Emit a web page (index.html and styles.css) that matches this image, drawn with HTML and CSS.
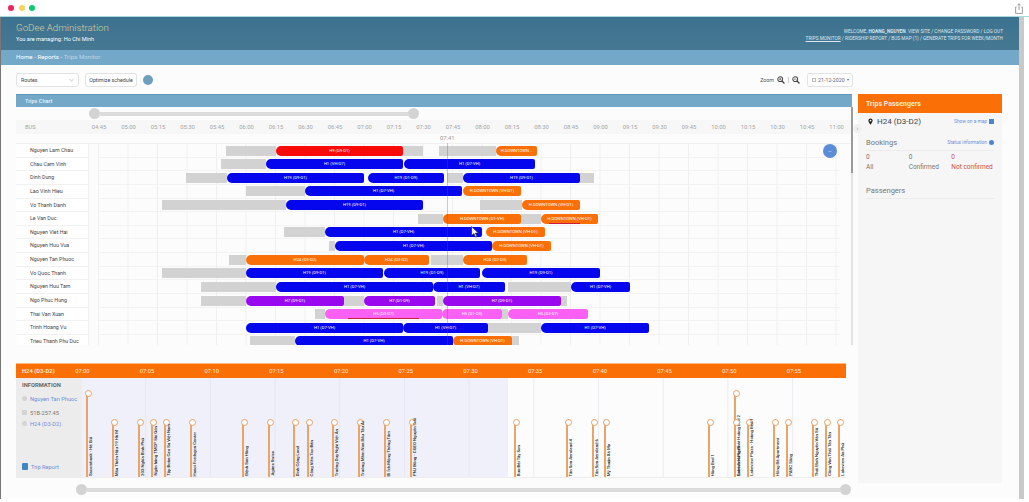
FILE: index.html
```html
<!DOCTYPE html>
<html lang="en">
<head>
    <meta charset="UTF-8">
    <title>Trips Monitor | GoDee Administration</title>
    <link rel="stylesheet" href="styles.css">
</head>
<body>
    <div class="window-bar">
        <div class="dots"><i class="dot red"></i><i class="dot yellow"></i><i class="dot green"></i></div>
        <svg class="share" viewBox="0 0 8 11" width="8" height="11"><path d="M1.500 4H.6v6.400h6.800V4h-.9M4 7V.8M2.400 2.300 4 .7l1.600 1.600" fill="none" stroke="#888" stroke-width=".8"/></svg>
    </div>

    <div class="page">
        <header class="site-header">
            <div>
                <div class="brand">GoDee Administration</div>
                <div class="managing">You are managing: Ho Chi Minh</div>
            </div>
            <div class="user-links">
                <div>WELCOME, <b>HOANG_NGUYEN</b>. VIEW SITE / CHANGE PASSWORD / LOG OUT</div>
                <div><u>TRIPS MONITOR</u> / RIDERSHIP REPORT / BUS MAP (1) / GENERATE TRIPS FOR WEEK/MONTH</div>
            </div>
        </header>
        <nav class="crumbs">Home - Reports - <span>Trips Monitor</span></nav>

        <div class="toolbar">
            <div class="box routes">Routes
                <svg viewBox="0 0 6 4" width="5" height="4"><path d="M.5.8 3 3.200 5.500.8" fill="none" stroke="#999" stroke-width=".7"/></svg>
            </div>
            <div class="box optimize">Optimize schedule</div>
            <i class="status-dot"></i>
            <div class="zoom">
                Zoom
                <svg viewBox="0 0 10 10" width="8" height="8"><circle cx="4" cy="4" r="3" fill="none" stroke="#444" stroke-width="1.300"/><path d="M6.300 6.300 9.300 9.300" stroke="#444" stroke-width="1.600"/><path d="M2.500 4h3M4 2.500v3" stroke="#444" stroke-width=".8"/></svg>
                <i class="zoom-sep"></i>
                <svg viewBox="0 0 10 10" width="8" height="8"><circle cx="4" cy="4" r="3" fill="none" stroke="#444" stroke-width="1.300"/><path d="M6.300 6.300 9.300 9.300" stroke="#444" stroke-width="1.600"/><path d="M2.500 4h3" stroke="#444" stroke-width=".8"/></svg>
            </div>
            <div class="box date"><i class="cal"></i>21-12-2020 <small>▾</small></div>
        </div>

        <div class="content">
            <main class="left">
                <section class="chart">
                    <h2 class="chart-title">Trips Chart</h2>
                    <div class="range top-range"><i class="knob"></i><i class="track"></i><i class="knob"></i></div>
                    <div class="hours" id="hours"><span class="hours-bus">BUS</span></div>
                    <div class="chart-body">
                        <div class="now-label">07:41</div>
                        <div class="rows" id="rows"></div>
                        <i class="now-line"></i>
                        <i class="fab">–</i>
                        <svg class="cursor" viewBox="0 0 8 12" width="8" height="12"><path d="M.6.6v9l2.300-2 1.600 3.500 1.400-.6-1.500-3.400h3z" fill="#fff" stroke="#222" stroke-width=".7"/></svg>
                    </div>
                    <div class="chart-scroll"><i></i></div>
                </section>

                <section class="trip">
                    <div class="trip-head" id="tripHead"><b>H24 (D3-D2)</b></div>
                    <div class="trip-body">
                        <aside class="info">
                            <h3>INFORMATION</h3>
                            <p class="info-line name"><i class="bullet round"></i><a>Nguyen Tan Phuoc</a></p>
                            <p class="info-line plate"><i class="bullet"></i>51B-257.45</p>
                            <p class="info-line route"><i class="bullet round"></i><a>H24 (D3-D2)</a></p>
                            <p class="report"><i class="report-icon"></i><a>Trip Report</a></p>
                        </aside>
                        <div class="stops" id="stops"><i class="done"></i></div>
                    </div>
                    <div class="range bottom-range"><i class="knob"></i><i class="track"></i><i class="knob"></i></div>
                </section>
            </main>

            <i class="collapse">›</i>

            <aside class="side">
                <h2 class="side-title">Trips Passengers</h2>
                <div class="side-body">
                    <div class="side-route">
                        <svg viewBox="0 0 8 10" width="5" height="7"><path d="M4 0a3.400 3.400 0 0 0-3.400 3.400C.6 6 4 10 4 10s3.400-4 3.400-6.600A3.400 3.400 0 0 0 4 0zm0 4.800a1.400 1.400 0 1 1 0-2.800 1.400 1.400 0 0 1 0 2.800z" fill="#222"/></svg>
                        <span>H24 (D3-D2)</span>
                        <a class="side-link">Show on a map <i class="map-icon"></i></a>
                    </div>
                    <div class="side-section">
                        <span>Bookings</span>
                        <a class="side-link">Status information <i class="info-icon"></i></a>
                    </div>
                    <div class="counts">
                        <div><b>0</b>All</div>
                        <div><b>0</b>Confirmed</div>
                        <div class="bad"><b>0</b>Not confirmed</div>
                    </div>
                    <div class="side-section passengers"><span>Passengers</span></div>
                </div>
            </aside>
        </div>
    </div>
    <script src="script.js"></script>
</body>
</html>
```

FILE: styles.css
```css
* {
    box-sizing: border-box;
}

html, body {
    height: 502px;
    margin: 0;
    overflow: hidden;
    background: #fff;
}

body {
    font-family: Roboto, "Liberation Sans", sans-serif;
    color: #555;
    font-size: 6px;
}

i {
    display: block;
    font-style: normal;
}

/* window chrome */
.window-bar {
    height: 17px;
    display: flex;
    align-items: center;
    justify-content: space-between;
    padding: 0 6px 0 8px;
    border-bottom: 1px solid #a8dcdc;
}

.dots {
    display: flex;
    gap: 4.500px;
}

.dot {
    width: 6px;
    height: 6px;
    border-radius: 50%;
}

.red { background: #f0245c; }
.yellow { background: #fbd35c; }
.green { background: #10c878; }

.page {
    height: 482px;
    margin-right: 5px;
    border-left: 1px solid #777;
    border-right: 5px solid #c9c9c9;
    background: #fcfcfc;
    width: 1024px;
}

.site-header {
    height: 33px;
    padding: 3px 16px 0 15px;
    display: flex;
    justify-content: space-between;
    background: linear-gradient(#3c728f, #467893);
    color: #fff;
}

.brand {
    font-size: 9.700px;
    font-weight: 300;
    color: #d9cd9c;
    line-height: 15px;
}

.managing {
    font-size: 5.600px;
    line-height: 9px;
}

.user-links {
    padding-top: 8px;
    text-align: right;
    font-size: 4.750px;
    line-height: 7px;
    color: #dbe8ef;
}

.crumbs {
    height: 15px;
    padding-left: 15px;
    line-height: 15px;
    font-size: 6.200px;
    color: #fff;
    background: #74a8c8;
}

.crumbs span {
    color: #b9d6e6;
}

/* toolbar */
.toolbar {
    height: 29px;
    padding: 8px 0 0 15px;
    width: 852px;
    display: flex;
    align-items: flex-start;
}

.box {
    height: 14px;
    background: #fff;
    border: 1px solid #e2e2e2;
    border-radius: 3px;
    font-size: 5.300px;
    line-height: 12px;
    color: #444;
}

.routes {
    width: 63px;
    padding: 0 4px;
    display: flex;
    align-items: center;
    justify-content: space-between;
}

.optimize {
    width: 52px;
    margin-left: 6px;
    text-align: center;
}

.status-dot {
    width: 10px;
    height: 10px;
    margin: 2px 0 0 6px;
    border-radius: 50%;
    background: #6f9fbd;
}

.zoom {
    margin-left: auto;
    display: flex;
    align-items: center;
    gap: 3px;
    height: 14px;
    font-size: 5.300px;
    color: #555;
}

.zoom-sep {
    width: 1px;
    height: 6px;
    background: #ccc;
}

.date {
    width: 46px;
    margin-left: 7px;
    display: flex;
    align-items: center;
    gap: 2px;
    padding-left: 4px;
    color: #666;
}

.date small {
    font-size: 4px;
}

.cal {
    width: 4px;
    height: 4px;
    border: 1px solid #bbb;
}

.content {
    display: flex;
    align-items: flex-start;
    position: relative;
}

.left {
    width: 836px;
    margin-left: 15px;
}

/* chart */
.chart {
    position: relative;
}

.chart-title {
    margin: 0;
    height: 13px;
    padding-left: 9px;
    font-size: 5.500px;
    font-weight: 500;
    line-height: 13px;
    color: #e8f1f6;
    background: #74a8c8;
    border-top: 1px solid #5f97ba;
}

.range {
    display: flex;
    align-items: center;
}

.knob {
    width: 11px;
    height: 11px;
    flex: none;
    border-radius: 50%;
    background: #d3d3d3;
}

.track {
    height: 4px;
    flex: none;
    background: #dcdcdc;
}

.top-range {
    height: 13px;
    padding-left: 73px;
}

.top-range .track {
    width: 308px;
}

.hours {
    height: 14px;
    display: flex;
    align-items: center;
    background: #f7f7f7;
    padding-left: 68.250px;
    position: relative;
    font-size: 5.800px;
    color: #a5a5a5;
}

.hours span {
    flex: none;
    width: 29.500px;
    text-align: center;
}

.hours .hours-bus {
    position: absolute;
    left: 9px;
    width: auto;
}

.chart-body {
    position: relative;
    height: 211px;
    padding-top: 9px;
    overflow: hidden;
}

.rows {
    height: 202px;
    overflow: hidden;
    border-top: 1px solid #f0f0f0;
}

.row {
    height: 13.650px;
    display: flex;
}

.row-name {
    width: 73px;
    flex: none;
    padding-left: 14px;
    font-size: 5.300px;
    line-height: 12.600px;
    color: #444;
    background: #fff;
    border-bottom: 1px solid #f1f1f1;
    border-right: 1px solid #f1f1f1;
}

.row-track {
    position: relative;
    width: 742px;
    margin-left: 9px;
    border-bottom: 1px solid #f3f3f3;
    background-image: linear-gradient(90deg, #f0f0f0 1px, transparent 1px);
    background-size: 29.500px 100%;
}

.bar {
    position: absolute;
    top: 1.500px;
    height: 10px;
    font-size: 4.200px;
    line-height: 10px;
    text-align: center;
    color: #fff;
    white-space: nowrap;
    overflow: hidden;
    border-radius: 5px 2px 2px 5px;
}

.idle {
    background: #d2d2d2;
    border-radius: 0;
}

.blue { background: #0505ee; }
.hot { background: #fb0a0a; }
.orange { background: #fb7006; }
.purple { background: #9a08f0; }
.pink { background: #fb60f5; }

.late {
    position: absolute;
    top: 10.500px;
    height: 1px;
    background: #d01c3c;
}

.now-label {
    position: absolute;
    left: 424px;
    top: 1px;
    font-size: 5.800px;
    color: #999;
}

.now-line {
    position: absolute;
    left: 431px;
    top: 9px;
    bottom: 0;
    width: 1px;
    background: rgba(90, 90, 90, 0.3);
}

.fab {
    position: absolute;
    left: 807px;
    top: 10px;
    width: 14px;
    height: 14px;
    border-radius: 50%;
    background: #5b8dd6;
    color: #cfe0f5;
    text-align: center;
    line-height: 13px;
    font-size: 6px;
}

.cursor {
    position: absolute;
    left: 455px;
    top: 92px;
}

.chart-scroll {
    position: absolute;
    right: -1px;
    top: 13px;
    width: 2px;
    height: 238px;
    background: #e4e4e4;
}

.chart-scroll i {
    height: 66px;
    background: #9a9a9a;
}

/* trip detail */
.trip {
    width: 830px;
    margin-top: 18px;
}

.trip-head {
    height: 15px;
    display: flex;
    align-items: center;
    padding-left: 6px;
    background: #fb7006;
    border-top: 1px solid #fbb77a;
    color: #ffe6d0;
    font-size: 5.800px;
}

.trip-head b {
    width: 28px;
    flex: none;
    font-weight: 700;
    white-space: nowrap;
}

.trip-head span {
    width: 64.700px;
    flex: none;
    text-align: center;
}

.trip-body {
    height: 100px;
    display: flex;
    border-bottom: 1px solid #eee;
}

.info {
    width: 65px;
    flex: none;
    padding: 3px 0 0 6px;
    background: #ececec;
    font-size: 5.700px;
    color: #777;
}

.info h3 {
    margin: 0 0 4px;
    font-size: 5.800px;
    font-weight: 700;
    line-height: 9px;
    color: #666;
}

.info-line {
    margin: 0;
    display: flex;
    align-items: center;
    gap: 3px;
    height: 9px;
    white-space: nowrap;
}

.info a {
    color: #6a90d6;
}

.plate {
    margin-top: 5px;
}

.route {
    margin-top: 2px;
}

.bullet {
    width: 5px;
    height: 5px;
    flex: none;
    background: #d4d4d4;
}

.bullet.round {
    border-radius: 50%;
}

.report {
    margin: 35px 0 0;
    display: flex;
    align-items: center;
    gap: 3px;
}

.report-icon {
    width: 6px;
    height: 7px;
    border-radius: 1px;
    background: #3f86c6;
}

.stops {
    position: relative;
    flex: 1;
    overflow: hidden;
    background-image: linear-gradient(90deg, #ececf2 1px, transparent 1px);
    background-size: 64.700px 100%;
    background-position: -0.500px 0;
}

.done {
    position: absolute;
    left: 0;
    top: 0;
    bottom: 0;
    width: 427px;
    background: rgba(225, 225, 248, 0.42);
}

.stop {
    position: absolute;
    bottom: 0;
    width: 1.500px;
    background: #e9a569;
}

.stop::before {
    content: "";
    position: absolute;
    top: -2.500px;
    left: -1.750px;
    width: 5px;
    height: 5px;
    background: #fff;
    border: 1px solid #e9a066;
    border-radius: 50%;
}

.stop span {
    position: absolute;
    left: 2px;
    bottom: 1px;
    writing-mode: vertical-rl;
    transform: rotate(180deg);
    white-space: nowrap;
    font-size: 4.300px;
    line-height: 5px;
    font-weight: 500;
    color: #222;
}

.bottom-range {
    height: 11px;
    margin-top: 6px;
    padding-left: 60px;
}

.bottom-range .track {
    width: 753px;
}

/* right panel */
.collapse {
    position: absolute;
    left: 852px;
    top: 30px;
    width: 9px;
    height: 9px;
    border-radius: 50%;
    background: #f0f0f0;
    color: #999;
    text-align: center;
    line-height: 8px;
    font-size: 6px;
}

.side {
    width: 144px;
    margin-left: 6px;
    height: 389px;
    background: #f6f6f6;
    color: #777;
}

.side-title {
    margin: 0;
    height: 19px;
    padding-left: 8px;
    background: #fb7006;
    color: #ffe6d0;
    font-size: 7px;
    font-weight: 700;
    line-height: 20px;
}

.side-body {
    padding: 0 8px;
}

.side-route {
    height: 17px;
    display: flex;
    align-items: center;
    gap: 4px;
    padding-left: 2px;
    font-size: 8px;
    color: #444;
}

.side-link {
    margin-left: auto;
    display: flex;
    align-items: center;
    gap: 2px;
    font-size: 4.800px;
    color: #6a90d6;
}

.map-icon {
    width: 5px;
    height: 5px;
    background: #4a86c8;
}

.info-icon {
    width: 5px;
    height: 5px;
    border-radius: 50%;
    background: #4a86d0;
}

.side-section {
    height: 17px;
    margin-top: 4px;
    display: flex;
    align-items: center;
    border-bottom: 1px solid #ececec;
    font-size: 7.500px;
}

.counts {
    display: flex;
    padding-top: 2px;
    font-size: 6.500px;
}

.counts div {
    width: 43px;
    line-height: 9.500px;
}

.counts b {
    display: block;
    font-weight: 400;
}

.counts .bad {
    color: #d05050;
    white-space: nowrap;
}

.passengers {
    margin-top: 10px;
}
```

FILE: script.js
```js
// x positions are page pixels, the chart starts at 98
const TRACK_LEFT = 98;
const STOPS_LEFT = 82;

const rows = [
    ["Nguyen Lam Chau", [[226, 276], [276, 403, "hot", "H9 (D9-D1)"], [403, 423], [439, 496], [496, 537, "orange", "H.DOWNTOWN .."]]],
    ["Chau Cam Vinh", [[221, 266], [266, 403, "blue", "H1 (VH-D7)"], [404, 535, "blue", "H1 (D7-VH)"]]],
    ["Dinh Dung", [[186, 227], [227, 364, "blue", "H19 (D9-D1)"], [368, 444, "blue", "H19 (D1-D9)"], [447, 463], [463, 580, "blue", "H19 (D9-D1)"], [580, 594]]],
    ["Lao Vinh Hieu", [[246, 305], [305, 462, "blue", "H1 (D7-VH)"], [463, 521, "orange", "H.DOWNTOWN (VH-D1)"]]],
    ["Vo Thanh Danh", [[162, 286], [286, 423, "blue", "H19 (D9-D1)"], [480, 522], [522, 580, "orange", "H.DOWNTOWN (VH-D1)"]]],
    ["Le Van Duc", [[418, 443], [443, 521, "orange", "H.DOWNTOWN (D1-VH)"], [521, 541], [541, 598, "orange", "H.DOWNTOWN (VH-D1)", [549, 580]]]],
    ["Nguyen Viet Hai", [[284, 325], [325, 482, "blue", "H1 (D7-VH)"], [486, 545, "orange", "H.DOWNTOWN (VH-D1)"]]],
    ["Nguyen Huu Vua", [[329, 335], [335, 492, "blue", "H1 (D7-VH)"], [492, 551, "orange", "H.DOWNTOWN (VH-D1)"]]],
    ["Nguyen Tan Phuoc", [[229, 246], [246, 364, "orange", "H24 (D3-D2)"], [364, 429, "orange", "H24 (D3-D2)"], [431, 463], [463, 527, "orange", "H24 (D2-D3)"]]],
    ["Vo Quoc Thanh", [[162, 246], [246, 383, "blue", "H19 (D9-D1)"], [384, 480, "blue", "H19 (D1-D9)"], [482, 600, "blue", "H19 (D9-D1)"]]],
    ["Nguyen Huu Tam", [[201, 276], [276, 433, "blue", "H1 (D7-VH)"], [433, 505, "blue", "H1 (VH-D7)"], [508, 571], [571, 630, "blue", "H1 (D7-VH)"]]],
    ["Ngo Phuc Hung", [[201, 246], [246, 344, "purple", "H7 (D9-D1)"], [344, 364], [364, 435, "purple", "H7 (D1-D9)"], [437, 443], [443, 561, "purple", "H7 (D9-D1)"], [561, 567]]],
    ["Thai Van Xuan", [[315, 325], [325, 442, "pink", "H5 (D3-D7)", [348, 419]], [442, 502, "pink", "H5 (D1-D3)"], [502, 508], [508, 588, "pink", "H5 (D3-D7)"]]],
    ["Trinh Hoang Vu", [[246, 403, "blue", "H1 (D7-VH)"], [403, 488, "blue", "H1 (VH-D7)"], [488, 541], [541, 649, "blue", "H1 (D7-VH)"]]],
    ["Trieu Thanh Phu Duc", [[250, 295], [295, 453, "blue", "H1 (D7-VH)"], [453, 512, "orange", "H.DOWNTOWN (VH-D1)"], [512, 519]]],
];

const stops = [
    [88, "Sacombank - Hà Giá", 1],
    [114, "Mẫu Thiên Hậu 19 Hà M"],
    [140, "203 Nghĩa Bình Phú"],
    [153, "Ngân hàng TMCP Sài Gòn"],
    [166, "Tập Đoàn Cao Su Việt Nam"],
    [192, "Hanoi Fordagon Center"],
    [244, "Bệnh Sơn Hồng"],
    [270, "Agües Swiss"],
    [295, "Dinh Cộng Land"],
    [309, "Công Viên Tao Đàn"],
    [334, "Trường Duy Nghi Việt Ân"],
    [360, "Trường Mầm Non Bầu Tâu Ái"],
    [386, "Bì Ích Mộng Thông Tâm"],
    [412, "PNJ Đồng - CGEO Nguyễn Trãi"],
    [516, "Bưu Đài Tây Sơn"],
    [568, "Tân Sơn Aeroland 4"],
    [594, "Tân Sơn Aeroland 6"],
    [606, "Mỹ Thuận Xá Mạ"],
    [710, "Hồng Bed 1"],
    [736, "Everich Hưng Phát Hoàng Bed 2", 1],
    [736, "Lakeview Plaza"],
    [749, "Lakeview Plaza - Hoàng Bed 1"],
    [775, "Hồng Bà Apartment"],
    [788, "PARC Sông"],
    [814, "Thái Bình Nguyên Văn Sâ"],
    [827, "Công Vàn Thái Tân Tân"],
    [840, "Lakeview An Phú"],
];

function pad(n) {
    return String(n).padStart(2, "0");
}

function clock(minutes) {
    return pad(Math.floor(minutes / 60)) + ":" + pad(minutes % 60);
}

// hour labels above the chart
const hours = document.getElementById("hours");
for (let m = 285; m <= 660; m += 15) {
    const label = document.createElement("span");
    label.textContent = clock(m);
    hours.appendChild(label);
}

// one row per driver
const rowsBox = document.getElementById("rows");
rows.forEach(([name, bars]) => {
    const row = document.createElement("div");
    row.className = "row";
    row.innerHTML = `<div class="row-name">${name}</div><div class="row-track"></div>`;
    const track = row.querySelector(".row-track");
    bars.forEach(([from, to, color, text, late]) => {
        const bar = document.createElement("div");
        bar.className = "bar " + (color || "idle");
        bar.style.left = (from - TRACK_LEFT) + "px";
        bar.style.width = (to - from) + "px";
        bar.textContent = text || "";
        track.appendChild(bar);
        if (late) {
            const mark = document.createElement("div");
            mark.className = "late";
            mark.style.left = (late[0] - TRACK_LEFT) + "px";
            mark.style.width = (late[1] - late[0]) + "px";
            track.appendChild(mark);
        }
    });
    rowsBox.appendChild(row);
});

// minutes above the trip timeline
const tripHead = document.getElementById("tripHead");
for (let m = 420; m < 480; m += 5) {
    const label = document.createElement("span");
    label.textContent = clock(m);
    tripHead.appendChild(label);
}

// stops of the selected trip
const stopsBox = document.getElementById("stops");
stops.forEach(([x, name, high]) => {
    const stop = document.createElement("div");
    stop.className = "stop";
    stop.style.left = (x - STOPS_LEFT - 0.75) + "px";
    stop.style.height = (high ? 85 : 56) + "px";
    stop.innerHTML = `<span>${name}</span>`;
    stopsBox.appendChild(stop);
});
```
